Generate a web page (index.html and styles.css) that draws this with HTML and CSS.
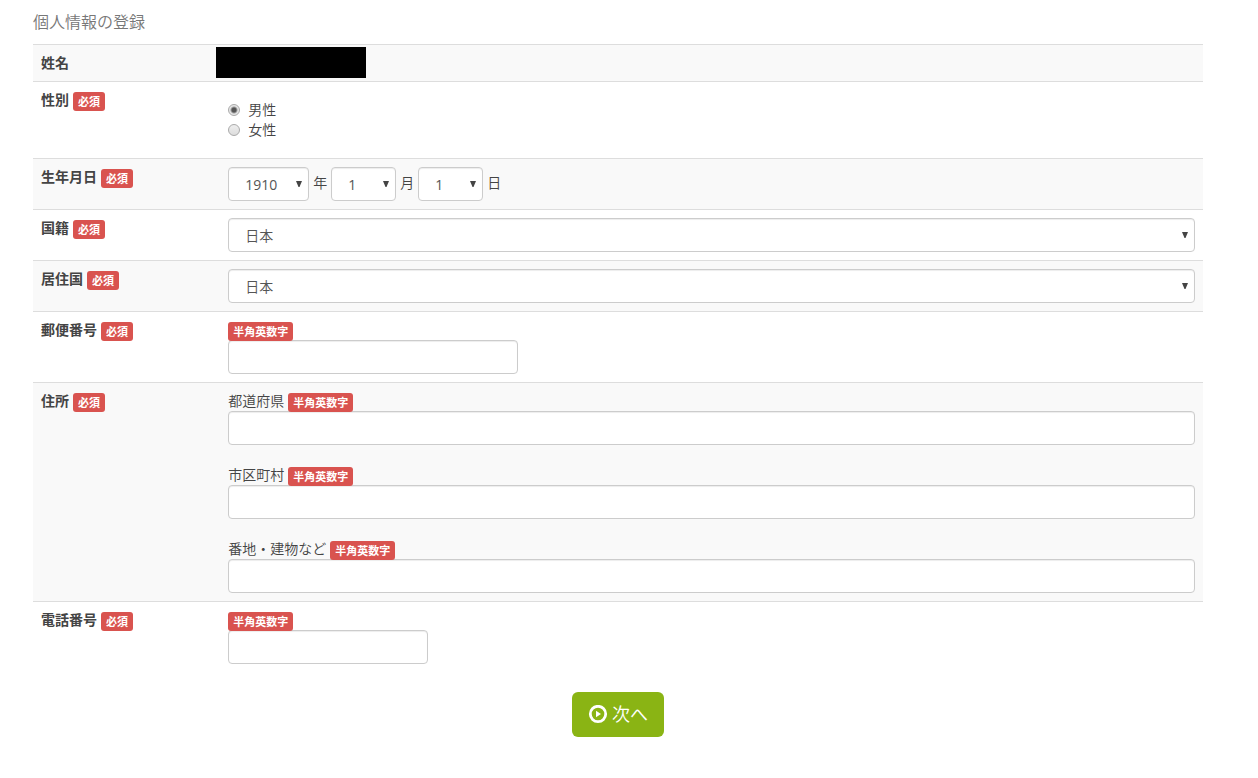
FILE: index.html
```html
<!DOCTYPE html>
<html lang="ja">
<head>
    <meta charset="UTF-8">
    <meta name="viewport" content="width=device-width, initial-scale=1.0">
    <title>個人情報の登録</title>
    <link rel="stylesheet" href="styles.css">
</head>
<body>
    <form class="container">
        <h1 class="page-title">個人情報の登録</h1>

        <table class="table">
            <tbody>
                <tr>
                    <th scope="row">姓名</th>
                    <td><div class="name-mask"></div></td>
                </tr>
                <tr>
                    <th scope="row"><div class="caption">性別 <span class="tag">必須</span></div></th>
                    <td>
                        <div class="radio-group">
                            <label class="radio"><input type="radio" name="gender" value="male" checked>男性</label>
                            <label class="radio"><input type="radio" name="gender" value="female">女性</label>
                        </div>
                    </td>
                </tr>
                <tr>
                    <th scope="row"><div class="caption">生年月日 <span class="tag">必須</span></div></th>
                    <td>
                        <div class="birthday">
                            <select id="year" class="form-control select year"><option>1910</option></select>
                            <label for="year">年</label>
                            <select id="month" class="form-control select day"><option>1</option></select>
                            <label for="month">月</label>
                            <select id="day" class="form-control select day"><option>1</option></select>
                            <label for="day">日</label>
                        </div>
                    </td>
                </tr>
                <tr>
                    <th scope="row"><label for="nationality" class="caption">国籍 <span class="tag">必須</span></label></th>
                    <td><select id="nationality" class="form-control select"><option>日本</option></select></td>
                </tr>
                <tr>
                    <th scope="row"><label for="residence" class="caption">居住国 <span class="tag">必須</span></label></th>
                    <td><select id="residence" class="form-control select"><option>日本</option></select></td>
                </tr>
                <tr>
                    <th scope="row"><label for="zip" class="caption">郵便番号 <span class="tag">必須</span></label></th>
                    <td>
                        <div class="caption"><span class="tag">半角英数字</span></div>
                        <input type="text" id="zip" class="form-control zip">
                    </td>
                </tr>
                <tr>
                    <th scope="row"><div class="caption">住所 <span class="tag">必須</span></div></th>
                    <td>
                        <div class="address">
                            <div>
                                <label for="prefecture" class="caption">都道府県 <span class="tag">半角英数字</span></label>
                                <input type="text" id="prefecture" class="form-control">
                            </div>
                            <div>
                                <label for="city" class="caption">市区町村 <span class="tag">半角英数字</span></label>
                                <input type="text" id="city" class="form-control">
                            </div>
                            <div>
                                <label for="street" class="caption">番地・建物など <span class="tag">半角英数字</span></label>
                                <input type="text" id="street" class="form-control">
                            </div>
                        </div>
                    </td>
                </tr>
                <tr>
                    <th scope="row"><label for="tel" class="caption">電話番号 <span class="tag">必須</span></label></th>
                    <td>
                        <div class="caption"><span class="tag">半角英数字</span></div>
                        <input type="tel" id="tel" class="form-control tel">
                    </td>
                </tr>
            </tbody>
        </table>

        <div class="actions">
            <button type="button" class="btn-next">
                <svg class="icon" viewBox="0 0 20 20" aria-hidden="true">
                    <circle cx="10" cy="9" r="7.7" fill="none" stroke="currentColor" stroke-width="2.8"/>
                    <path d="M8 5.8v6.4L13 9z" fill="currentColor"/>
                </svg>
                次へ
            </button>
        </div>
    </form>
</body>
</html>
```
FILE: styles.css
```css
* {
    box-sizing: border-box;
}
body {
    margin: 0;
    font-family: "Open Sans", "Noto Sans CJK JP", sans-serif;
    font-size: 14px;
    font-weight: 350;
    line-height: 20px;
    color: #444;
    background-color: #fff;
}
.container {
    padding: 10px 55px 40px 33px;
}
.page-title {
    margin: 0 0 10px;
    font-size: 16px;
    font-weight: 350;
    line-height: 24px;
    color: #777;
}

/* table */
.table {
    width: 100%;
    margin-bottom: 20px;
    border-collapse: separate;
    border-spacing: 0;
}
.table th,
.table td {
    padding: 8px;
    border-top: 1px solid #ddd;
    text-align: left;
    vertical-align: top;
}
.table th {
    width: 16%;
    font-weight: bold;
}
.table tr:nth-child(odd) {
    background-color: #f9f9f9;
}
.name-mask {
    width: 150px;
    height: 31px;
    margin: -6px 0 -5px -12px;
    background-color: #000;
}
.caption {
    display: flex;
    gap: 4px;
}
.tag {
    margin: 2px 0 -1px;
    padding: 0 5px;
    border-radius: 3px;
    background-color: #d9534f;
    color: #fff;
    font-size: 11px;
    font-weight: bold;
    line-height: 19px;
}

/* form parts */
.form-control {
    display: block;
    width: 100%;
    height: 34px;
    padding: 6px 12px;
    border: 1px solid #ccc;
    border-radius: 4px;
    background-color: #fff;
    box-shadow: inset 0 1px 1px rgba(0, 0, 0, 0.075);
    color: #555;
    font: inherit;
    line-height: 20px;
}
.select {
    appearance: none;
    padding: 7px 16px 5px;
    background-image: url("data:image/svg+xml,%3Csvg xmlns='http://www.w3.org/2000/svg' viewBox='0 0 6 6'%3E%3Cpath d='M0 0h6L3.5 6h-1z' fill='%23444'/%3E%3C/svg%3E");
    background-repeat: no-repeat;
    background-position: right 6px top 13px;
    background-size: 6px 6px;
}
.birthday {
    display: flex;
    gap: 4px;
    line-height: 32px;
}
.birthday .select {
    font-weight: 400;
}
.year {
    width: 81px;
}
.day {
    width: 65px;
}
.zip {
    width: 290px;
}
.tel {
    width: 200px;
}
.address {
    display: grid;
    gap: 20px;
}
.radio-group {
    padding: 10px 0;
}
.radio {
    display: flex;
    align-items: center;
    gap: 8px;
}
.radio input {
    appearance: none;
    width: 12px;
    height: 12px;
    margin: 0;
    border: 1px solid #aaa;
    border-radius: 50%;
    background: linear-gradient(#eee, #ddd);
}
.radio input:checked {
    background: radial-gradient(circle, #555 0, #555 2px, #e6e6e6 4px);
}

.actions {
    text-align: center;
}
.btn-next {
    display: inline-flex;
    align-items: center;
    gap: 4px;
    padding: 10px 16px;
    border: 0;
    border-radius: 6px;
    background-color: #8ab414;
    color: #fff;
    font: inherit;
    font-size: 18px;
    line-height: 25px;
}
.icon {
    width: 20px;
    height: 20px;
}
```
